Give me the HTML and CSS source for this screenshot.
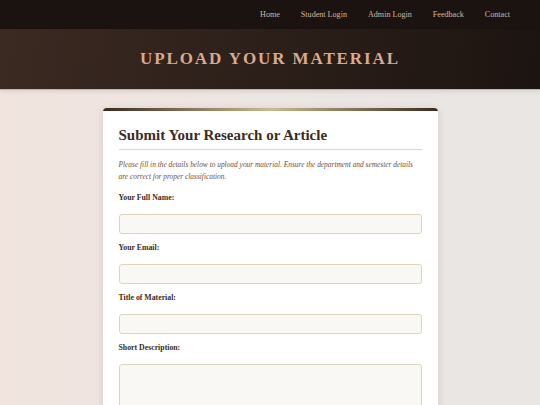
FILE: index.html
```html
<!DOCTYPE html>
<html>
<head>
<meta charset="utf-8">
<link rel="stylesheet" href="styles.css">
</head>
<body>
<nav class="topnav">
  <a href="#">Home</a>
  <a href="#">Student Login</a>
  <a href="#">Admin Login</a>
  <a href="#">Feedback</a>
  <a href="#">Contact</a>
</nav>
<header class="hero">
  <h1>UPLOAD YOUR MATERIAL</h1>
</header>
<main class="main">
  <section class="card">
    <h2>Submit Your Research or Article</h2>
    <p class="intro">Please fill in the details below to upload your material. Ensure the department and semester details are correct for proper classification.</p>
    <form class="form">
      <div class="field">
        <label>Your Full Name:</label>
        <input type="text">
      </div>
      <div class="field">
        <label>Your Email:</label>
        <input type="text">
      </div>
      <div class="field">
        <label>Title of Material:</label>
        <input type="text">
      </div>
      <div class="field">
        <label>Short Description:</label>
        <textarea></textarea>
      </div>
    </form>
  </section>
</main>
</body>
</html>
```
FILE: styles.css
```css
html, body {
  margin: 0;
  padding: 0;
}
body {
  font-family: "Liberation Serif", "DejaVu Serif", serif;
  background: linear-gradient(90deg, #f1e4df 0%, #ece6e3 60%, #e9e6e4 100%);
  min-height: 405px;
  overflow: hidden;
}
.topnav {
  height: 29px;
  background: #1b1310;
  display: flex;
  justify-content: flex-end;
  align-items: center;
  gap: 21px;
  padding-right: 30px;
}
.topnav a,
.topnav a:visited {
  color: #d4b7a1;
  text-decoration: none;
  font-size: 8.1px;
}
.hero {
  height: 60px;
  background: linear-gradient(100deg, #3b2a22 0%, #2c1f19 50%, #1c1411 100%);
  border-bottom: 1px solid #c9b894;
  display: flex;
  align-items: center;
  justify-content: center;
  box-shadow: 0 2px 4px rgba(0,0,0,0.08);
}
.hero h1 {
  margin: 0;
  color: #d9aa8f;
  font-size: 17px;
  letter-spacing: 1.9px;
  font-weight: bold;
}
.main {
  padding-top: 18px;
}
.card {
  width: 335px;
  margin: 0 auto;
  background:
    linear-gradient(90deg, #3a2a1e, #cbb98e 50%, #3a2a1e) top / 100% 3px no-repeat,
    #fff;
  border-radius: 4px;
  box-shadow: 0 2px 8px rgba(60, 40, 30, 0.15);
  padding: 18px 16px 20px;
  box-sizing: border-box;
  min-height: 320px;
}
.card h2 {
  margin: 0;
  font-size: 15px;
  line-height: 18px;
  color: #3b2b23;
  padding-bottom: 5px;
  border-bottom: 1px solid #ddd6c0;
}
.intro {
  margin: 9px 0 9px;
  font-style: italic;
  font-size: 7.4px;
  line-height: 12px;
  color: #6c4f45;
}
.form {
  display: flex;
  flex-direction: column;
  gap: 8px;
}
.field {
  display: flex;
  flex-direction: column;
}
.field label {
  font-size: 7.8px;
  line-height: 12px;
  font-weight: bold;
  color: #3a2c25;
  margin-bottom: 10px;
}
.field input,
.field textarea {
  height: 20px;
  box-sizing: border-box;
  background: #faf8f4;
  border: 1px solid #ddd5b9;
  border-radius: 3px;
  margin: 0;
  padding: 3px 6px;
  font-family: inherit;
}
.field textarea {
  height: 50px;
  resize: vertical;
}
```
